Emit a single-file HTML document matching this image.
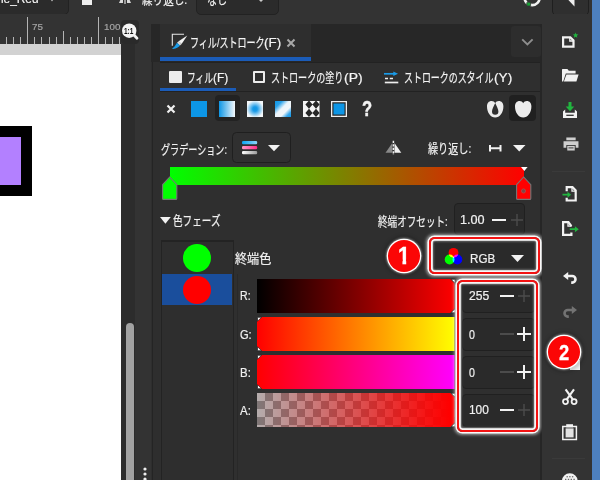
<!DOCTYPE html>
<html lang="ja"><head><meta charset="utf-8"><title>Inkscape fill and stroke</title>
<style>
html,body{margin:0;padding:0}
body{width:600px;height:480px;overflow:hidden;position:relative;background:#333333;font-family:"Liberation Sans","Noto Sans CJK JP",sans-serif}
.a{position:absolute}
.t{position:absolute;white-space:nowrap;transform-origin:0 50%;-webkit-text-stroke:.2px currentColor}
svg{position:absolute;overflow:visible}
.co{border:2px solid #f31212;border-radius:5.500px;box-shadow:0 0 0 1.600px rgba(255,255,255,.95),0 0 3px 2.500px rgba(255,255,255,.5),inset 0 0 0 1.800px rgba(255,255,255,.92),inset 0 0 2px 2.500px rgba(255,255,255,.45)}
.ci{width:32px;height:32px;border-radius:50%;background:#fb0606;box-shadow:0 0 0 1.300px #fff,0 0 2px 2.200px rgba(255,255,255,.38),0 0 4px 3.500px rgba(0,0,0,.28)}
.one{clip-path:polygon(0 0,100% 0,100% 19px,8.900px 19px,8.900px 100%,4.800px 100%,4.800px 19px,0 19px);-webkit-text-stroke:.4px #fff}
.ns{-webkit-text-stroke:0}
.q{-webkit-text-stroke:.5px #f4f4f4}
.two{-webkit-text-stroke:.3px #fff}
.sb{width:71px;height:31px;background:#2a2a2a;border:1px solid #202020;border-radius:4px}
</style></head><body>

<!-- ===== top bar ===== -->
<div class="a" style="left:-6px;top:-6px;width:73px;height:19px;background:#2b2b2b;border:1px solid #222;border-radius:5px"></div>
<span class="t" style="left:-3px;top:-10.1px;font-size:13px;line-height:18.2px;color:#f0f0f0;font-weight:normal;transform:scaleX(0.9130)">ne_Red</span>
<svg style="left:48.500px;top:-3px" width="6" height="5"><path d="M0 0h6l-3 4.500z" fill="#ccc"/></svg>
<div class="a" style="left:82px;top:-4px;width:10px;height:8.500px;background:#eee"></div>
<svg style="left:118px;top:-6px" width="14" height="10"><path d="M1 9L5 0V9zM9 9V0l4 9z" fill="#ddd"/><path d="M7 0v10" stroke="#fff" stroke-width="1"/></svg>
<span class="t" style="left:141.5px;top:-9.1px;font-size:13px;line-height:18.2px;color:#f0f0f0;font-weight:normal;transform:scaleX(0.8125)">繰り返し:</span>
<div class="a" style="left:196px;top:-6px;width:81px;height:19px;background:#2b2b2b;border:1px solid #222;border-radius:5px"></div>
<span class="t" style="left:207px;top:-9.1px;font-size:13px;line-height:18.2px;color:#f0f0f0;font-weight:normal;transform:scaleX(0.7692)">なし</span>
<svg style="left:257px;top:-2px" width="8" height="5"><path d="M0 0h8l-4 4z" fill="#ccc"/></svg>
<svg style="left:524px;top:-3px" width="18" height="12"><path d="M15.70 0.40A7.6 7.6 0 0 1 0.50 0.67" fill="none" stroke="#f2f2f2" stroke-width="2.600"/><rect x="2.800" y="5.200" width="3.800" height="3.800" rx=".6" fill="#17a535" stroke="#333" stroke-width=".8"/></svg>
<div class="a" style="left:552px;top:-6px;width:35px;height:19.500px;background:#2f2f2f;border:1px solid #1f1f1f;border-radius:5px"></div>
<svg style="left:567px;top:-8px" width="9" height="16"><path d="M7.500 0V14.500L1 7.600z" fill="#eee"/></svg>

<!-- ===== ruler ===== -->
<div class="a" id="ruler" style="left:0;top:14px;width:121px;height:30px;background:#333333;overflow:hidden">
<svg style="left:0;top:0" width="121" height="30">
<g stroke="#b4b4b4" stroke-width="1">
<path d="M6.5 23v7M13.5 23v7M20.5 23v7M34.5 23v7M41.5 23v7M49.5 23v7M56.5 23v7M70.5 23v7M77.5 23v7M84.5 23v7M91.5 23v7M105.5 23v7M112.5 23v7M119.5 23v7"/>
<path d="M63.5 17v13"/>
<path d="M27.5 3v27M98.5 3v27"/>
</g></svg>
</div>
<span class="t" style="left:31.7px;top:20.15px;font-size:9.5px;line-height:13.3px;color:#a4a4a4;font-weight:normal;transform:scaleX(1.0273)">75</span>
<span class="t" style="left:103.5px;top:20.15px;font-size:9.5px;line-height:13.3px;color:#a4a4a4;font-weight:normal;transform:scaleX(1.0312)">100</span>
<div class="a" style="left:0;top:44px;width:121px;height:11px;background:#d2d2d2"></div>
<div class="a" style="left:0;top:55px;width:121px;height:425px;background:#fff"></div>
<div class="a" style="left:0;top:126px;width:32px;height:70px;background:#000"></div>
<div class="a" style="left:0;top:137px;width:21px;height:48px;background:#b380ff"></div>

<!-- zoom 1:1 button -->
<div class="a" style="left:121px;top:20px;width:18px;height:24px;background:#2a2a2a;border-radius:4px"></div>
<svg style="left:121px;top:21.100px" width="20" height="20"><path d="M12 13l4 4.200" stroke="#f2f2f2" stroke-width="2.800" stroke-linecap="round"/><circle cx="8.200" cy="9.700" r="7.200" fill="#f4f4f4"/></svg>
<span class="t ns" style="left:124.2px;top:24.35px;font-size:9.5px;line-height:13.3px;color:#111111;font-weight:bold;transform:scaleX(0.6857)">1:1</span>

<!-- vertical scrollbar + handle dots -->
<svg style="left:142px;top:466px" width="6" height="14"><circle cx="3" cy="3" r="1.6" fill="#eee"/><circle cx="3" cy="8" r="1.6" fill="#eee"/><circle cx="3" cy="13" r="1.6" fill="#eee"/></svg>

<!-- ===== panel ===== -->
<div class="a" style="left:121px;top:44px;width:14px;height:436px;background:#2c2c2c"></div>
<div class="a" style="left:151px;top:24px;width:391px;height:456px;background:#2e2e2e"></div>
<div class="a" style="left:151px;top:24px;width:390px;height:38px;background:#272727"></div>
<div class="a" style="left:151.500px;top:62px;width:1px;height:418px;background:#242424"></div>
<div class="a" style="left:160px;top:24px;width:151px;height:33px;background:#2e2e2e"></div>
<div class="a" style="left:160px;top:57px;width:151px;height:4px;background:#1b5cb8"></div>
<div class="a" style="left:160px;top:62px;width:380px;height:418px;background:#2f2f2f;border-top:1px solid #222"></div>
<div class="a" style="left:160px;top:91px;width:381px;height:1px;background:#222"></div>
<div class="a" style="left:160px;top:88px;width:76px;height:3px;background:#1b5cb8"></div>
<div class="a" style="left:540px;top:24px;width:2px;height:456px;background:#262626"></div>
<div class="a" style="left:126px;top:322.500px;width:8px;height:170px;background:#a2a2a2;border-radius:4px"></div>
<!-- chevron button -->
<div class="a" style="left:511px;top:26px;width:30px;height:31px;background:#2d2d2d;border-radius:3px"></div>
<svg style="left:521px;top:37.500px" width="13" height="9"><path d="M1.200 1.300L6.400 6.500l5.200-5.200" fill="none" stroke="#8e8e8e" stroke-width="1.900"/></svg>

<!-- tab: icon + label + close -->
<svg style="left:171px;top:33px" width="17" height="18"><path d="M1.300 12.800V1.200H13" fill="none" stroke="#e8e8e8" stroke-width="1.100"/><path d="M16.300 2.400L10.600 11 7.600 8.200z" fill="#f4f4f4"/><path d="M10.600 11L7.600 8.200 6 9.800 9 12.600z" fill="#d8d8d8"/><path d="M6 9.800L9 12.600C7.200 14.800 4.500 16.400 0.800 15.800 3.400 14.400 4.400 12.300 6 9.800z" fill="#1a9be8"/></svg>
<span class="t" style="left:189.5px;top:34.4px;font-size:13px;line-height:18.2px;color:#f4f4f4;font-weight:normal;transform:scaleX(0.6944)">フィル/ストローク</span><span class="t" style="left:264.2px;top:34.1px;font-size:13px;line-height:18.2px;color:#f4f4f4;font-weight:normal;transform:scaleX(1.0294)">(F)</span>
<svg style="left:286.200px;top:38px" width="10" height="10"><path d="M1.5 1.5l7 7M8.5 1.5l-7 7" stroke="#a8a8a8" stroke-width="2"/></svg>

<!-- sub tabs -->
<div class="a" style="left:168.800px;top:70.600px;width:12.800px;height:12.600px;background:#ececec;border-radius:1px"></div>
<span class="t" style="left:186.8px;top:68.9px;font-size:13px;line-height:18.2px;color:#f4f4f4;font-weight:normal;transform:scaleX(0.6667)">フィル</span><span class="t" style="left:213.2px;top:68.6px;font-size:13px;line-height:18.2px;color:#f4f4f4;font-weight:normal;transform:scaleX(0.9176)">(F)</span>
<div class="a" style="left:252.800px;top:71px;width:8.300px;height:8.300px;border:2px solid #ececec;border-radius:1px"></div>
<span class="t" style="left:271px;top:68.9px;font-size:13px;line-height:18.2px;color:#f4f4f4;font-weight:normal;transform:scaleX(0.6952)">ストロークの塗り</span><span class="t" style="left:343.8px;top:68.6px;font-size:13px;line-height:18.2px;color:#f4f4f4;font-weight:normal;transform:scaleX(1.0706)">(P)</span>
<svg style="left:384px;top:71px" width="15" height="13"><path d="M0 2.800h10.500" stroke="#1a9be8" stroke-width="1.700"/><path d="M9.300 0.600l4.700 2.200-4.700 2.200z" fill="#1a9be8"/><path d="M1 7.500h3M5.800 7.500h3.200" stroke="#eee" stroke-width="1.500"/><path d="M0.800 11.500h13.500" stroke="#eee" stroke-width="1.700"/></svg>
<span class="t" style="left:404.2px;top:68.9px;font-size:13px;line-height:18.2px;color:#f4f4f4;font-weight:normal;transform:scaleX(0.6877)">ストロークのスタイル</span><span class="t" style="left:494.1px;top:68.6px;font-size:13px;line-height:18.2px;color:#f4f4f4;font-weight:normal;transform:scaleX(1.0529)">(Y)</span>

<!-- paint type icons -->
<svg style="left:166px;top:104px" width="10" height="10"><path d="M1.5 1.5l7 7M8.5 1.5l-7 7" stroke="#f0f0f0" stroke-width="2.2"/></svg>
<div class="a" style="left:191px;top:101px;width:16px;height:16px;background:#0d96e6"></div>
<div class="a" style="left:215px;top:95px;width:25px;height:26px;background:#222;border-radius:4px"></div>
<div class="a" style="left:219px;top:101px;width:16px;height:16px;background:linear-gradient(90deg,#0d96e6,#f4f8fb)"></div>
<div class="a" style="left:247px;top:101px;width:16px;height:16px;background:radial-gradient(circle at 50% 50%,#0d96e6 0,#1a9be8 20%,#f4f8fb 75%)"></div>
<div class="a" style="left:275px;top:101px;width:16px;height:16px;background:linear-gradient(135deg,#0d96e6 0,#2aa2ea 22%,#eef5fa 45%,#f2f6fa 66%,#3aa8ec 84%,#0d96e6 100%)"></div>
<svg style="left:302.800px;top:100.900px" width="16.500" height="16" viewBox="0 0 16.500 16"><rect width="16.500" height="16" fill="#f4f4f4"/><path d="M6 -0.55l3.6 4.15l-3.6 4.15l-3.6 -4.15zM6 7.75l3.6 4.15l-3.6 4.15l-3.6 -4.15zM13 -0.55l3.6 4.15l-3.6 4.15l-3.6 -4.15zM13 7.75l3.6 4.15l-3.6 4.15l-3.6 -4.15z" fill="#262626"/></svg>
<div class="a" style="left:331px;top:101px;width:14px;height:14px;border:1px solid #f0f0f0;background:#0d96e6;box-shadow:inset 0 0 0 .3px #f0f0f0,inset 0 0 0 1.500px #2a2a2a"></div>
<span class="t q" style="left:362px;top:93.9px;font-size:22px;line-height:30.8px;color:#f4f4f4;font-weight:bold;transform:scaleX(0.7538)">?</span>
<!-- heart icons -->
<svg style="left:486.900px;top:100.500px" width="17" height="17"><path d="M8.200 2.300C7.500 0.800 6.200 0 4.600 0 1.800 0 0 2.100 0 5.400 0 11.500 3.700 16.500 8.200 16.500 12.700 16.500 16.400 11.500 16.400 5.400 16.400 2.100 14.600 0 11.800 0 10.200 0 8.900 0.800 8.200 2.300z" fill="#ececec"/><path d="M8.200 2C6.600 5.800 5 8.300 5 10.600a3.200 3.200 0 0 0 6.400 0C11.400 8.300 9.800 5.800 8.200 2z" fill="#2f2f2f"/></svg>
<div class="a" style="left:509.300px;top:95.200px;width:27.200px;height:26px;background:#202020;border-radius:4px"></div>
<svg style="left:514.900px;top:100.700px" width="17" height="17"><path d="M8.200 2.300C7.500 0.800 6.200 0 4.600 0 1.800 0 0 2.100 0 5.400 0 11.500 3.700 16.500 8.200 16.500 12.700 16.500 16.400 11.500 16.400 5.400 16.400 2.100 14.600 0 11.800 0 10.200 0 8.900 0.800 8.200 2.300z" fill="#ececec"/></svg>

<!-- gradient row -->
<span class="t" style="left:160.8px;top:141.2px;font-size:13px;line-height:18.2px;color:#f0f0f0;font-weight:normal;transform:scaleX(0.6989)">グラデーション:</span>
<div class="a" style="left:232.300px;top:131.700px;width:57px;height:29.500px;background:#303030;border:1px solid #1f1f1f;border-radius:4.500px"></div>
<svg style="left:242.300px;top:140.800px" width="15.200" height="14"><defs><linearGradient id="gA"><stop offset="0" stop-color="#0aa6f4"/><stop offset="1" stop-color="#8fd6fb"/></linearGradient><linearGradient id="gB"><stop offset="0" stop-color="#ff9cc6"/><stop offset="1" stop-color="#ff2d8a"/></linearGradient><linearGradient id="gC"><stop offset="0" stop-color="#ffffff"/><stop offset="1" stop-color="#9c9c9c"/></linearGradient></defs><rect x="0" y="0" width="15.200" height="3.200" rx="1.200" fill="url(#gA)"/><rect x="0" y="5" width="15.200" height="3.300" rx="1.200" fill="url(#gB)"/><rect x="0" y="10" width="15.200" height="3.200" rx="1.200" fill="url(#gC)"/></svg>
<svg style="left:267.700px;top:144.500px" width="13" height="8"><path d="M0 0h12L6 6.300z" fill="#f2f2f2"/></svg>
<svg style="left:385px;top:140px" width="17" height="16"><path d="M7.300 3V12.800H0.500z" fill="#8a8a8a"/><path d="M9.500 3V12.800h6.800z" fill="#f0f0f0"/><path d="M8.400 0.700V15" stroke="#f0f0f0" stroke-width="1.500" stroke-dasharray="2.200 1.300"/></svg>
<span class="t" style="left:427.5px;top:140.4px;font-size:13px;line-height:18.2px;color:#f0f0f0;font-weight:normal;transform:scaleX(0.7768)">繰り返し:</span>
<svg style="left:488.800px;top:144.700px" width="13" height="7"><path d="M1 0v6.600M11.500 0v6.600M1 3.300h10.500" stroke="#f2f2f2" stroke-width="2" fill="none"/></svg>
<svg style="left:513px;top:145px" width="13" height="8"><path d="M0 0h12.500L6.250 6.500z" fill="#f2f2f2"/></svg>

<!-- gradient bar + stops -->
<div class="a" style="left:169.500px;top:166.700px;width:354.500px;height:18.300px;background:linear-gradient(90deg,#00ff00 0%,#ff0000 100%)"></div>
<svg style="left:162.300px;top:176px" width="16" height="24"><path d="M0.600 8.700L7.700 1 14.800 8.700V22.400a1 1 0 0 1-1 1H1.600a1 1 0 0 1-1-1z" fill="#00ff00" stroke="#767676" stroke-width="1.100"/></svg>
<svg style="left:520.700px;top:166.700px" width="8" height="5"><path d="M0 0h6.600L3.300 4z" fill="#fff"/></svg>
<svg style="left:516.300px;top:176px" width="16" height="24"><path d="M0.600 8.700L7.700 1 14.800 8.700V22.400a1 1 0 0 1-1 1H1.600a1 1 0 0 1-1-1z" fill="#ff0000" stroke="#767676" stroke-width="1.100"/><circle cx="7.500" cy="15" r="2.100" fill="#7a4848" stroke="#b05050" stroke-width=".7"/></svg>

<!-- colour phase header -->
<svg style="left:160px;top:217px" width="11" height="7"><path d="M0 0h10.800L5.400 6.800z" fill="#f2f2f2"/></svg>
<span class="t" style="left:173px;top:212.2px;font-size:13px;line-height:18.2px;color:#f0f0f0;font-weight:normal;transform:scaleX(0.7391)">色フェーズ</span>
<span class="t" style="left:377.5px;top:212.5px;font-size:13px;line-height:18.2px;color:#f0f0f0;font-weight:normal;transform:scaleX(0.7368)">終端オフセット:</span>
<div class="a" style="left:454px;top:203px;width:69px;height:29.500px;background:#2a2a2a;border:1px solid #202020;border-radius:4px"></div>
<span class="t" style="left:460px;top:211.85px;font-size:12.5px;line-height:17.5px;color:#f0f0f0;font-weight:normal;transform:scaleX(1.0125)">1.00</span>
<div class="a" style="left:491.500px;top:219px;width:14px;height:2px;background:#f2f2f2"></div>
<svg style="left:511px;top:214px" width="12" height="12"><path d="M6 0v12M0 6h12" stroke="#4c4c4c" stroke-width="1.400"/></svg>

<!-- stop list -->
<div class="a" style="left:161px;top:240px;width:70.500px;height:260px;border:1px solid #232323;border-top:2px solid #232323;background:#2e2e2e"></div>
<div class="a" style="left:162px;top:273.700px;width:70px;height:31.600px;background:#1a4e9c"></div>
<div class="a" style="left:183px;top:244px;width:28px;height:28px;border-radius:50%;background:#00ff00"></div>
<div class="a" style="left:183px;top:276px;width:28px;height:28px;border-radius:50%;background:#ff0000"></div>
<div class="a" style="left:237px;top:274px;width:1px;height:206px;background:#292929"></div>
<span class="t" style="left:235px;top:250.1px;font-size:13px;line-height:18.2px;color:#f0f0f0;font-weight:normal;transform:scaleX(0.9308)">終端色</span>

<!-- RGB dropdown + callout 1 -->
<div class="a" style="left:433.300px;top:240.500px;width:101.500px;height:27.500px;background:#2a2a2a;border:1px solid #202020;border-radius:4.500px"></div>
<svg style="left:444px;top:247px;isolation:isolate" width="19" height="18"><g style="isolation:isolate"><circle cx="9.500" cy="5.800" r="4.900" fill="#ff0000"/><circle cx="5.600" cy="12.500" r="4.900" fill="#00ff00" style="mix-blend-mode:screen"/><circle cx="13.400" cy="12.500" r="4.900" fill="#0000ff" style="mix-blend-mode:screen"/></g></svg>
<span class="t" style="left:469.5px;top:251.46px;font-size:12.2px;line-height:17.08px;color:#f0f0f0;font-weight:normal;transform:scaleX(0.9538)">RGB</span>
<svg style="left:510.500px;top:254.500px" width="14" height="8"><path d="M0 0h13L6.500 7z" fill="#f2f2f2"/></svg>
<div class="a co" style="left:429px;top:236.700px;width:107px;height:33.200px"></div>
<div class="a ci" style="left:388.200px;top:240px"></div>
<span class="t one" style="left:397.8px;top:240.4px;font-size:23px;line-height:32.2px;color:#ffffff;font-weight:bold;transform:scaleX(0.9231)">1</span>

<!-- sliders -->
<span class="t" style="left:240px;top:288.25px;font-size:12.5px;line-height:17.5px;color:#f0f0f0;font-weight:normal;transform:scaleX(0.8462)">R:</span>
<span class="t" style="left:240px;top:326.75px;font-size:12.5px;line-height:17.5px;color:#f0f0f0;font-weight:normal;transform:scaleX(0.8846)">G:</span>
<span class="t" style="left:240px;top:364.75px;font-size:12.5px;line-height:17.5px;color:#f0f0f0;font-weight:normal;transform:scaleX(0.9167)">B:</span>
<span class="t" style="left:240px;top:402.85px;font-size:12.5px;line-height:17.5px;color:#f0f0f0;font-weight:normal;transform:scaleX(0.9167)">A:</span>
<div class="a" style="left:257px;top:279px;width:197.5px;height:34px;background:linear-gradient(90deg,#000 0%,#ff0000 100%);clip-path:polygon(0 0,calc(100% - 4px) 0,100% 4px,100% calc(100% - 4px),calc(100% - 4px) 100%,0 100%)"></div>
<div class="a" style="left:257px;top:317px;width:197.5px;height:34px;background:linear-gradient(90deg,#ff0000 0%,#ffff00 100%);clip-path:polygon(4px 0,100% 0,100% 100%,4px 100%,0 calc(100% - 4px),0 4px)"></div>
<div class="a" style="left:257px;top:355px;width:197.5px;height:34px;background:linear-gradient(90deg,#ff0000 0%,#ff00ff 100%);clip-path:polygon(4px 0,100% 0,100% 100%,4px 100%,0 calc(100% - 4px),0 4px)"></div>
<div class="a" style="left:257px;top:393px;width:197.5px;height:34px;clip-path:polygon(0 0,calc(100% - 4px) 0,100% 4px,100% calc(100% - 4px),calc(100% - 4px) 100%,0 100%);background:linear-gradient(90deg,rgba(255,0,0,.03) 0%,rgba(255,0,0,1) 97%),conic-gradient(#7c7c7c 25%,#b2b2b2 0 50%,#7c7c7c 0 75%,#b2b2b2 0) 0 0/16px 16px"></div>
<!-- slider markers -->
<svg style="left:450px;top:279px" width="6" height="34"><path d="M5 0.300h-4L5 4.300z" fill="#fff" stroke="#1c1c1c" stroke-width=".7"/><path d="M5 33.7h-4L5 29.7z" fill="#fff" stroke="#1c1c1c" stroke-width=".7"/></svg>
<svg style="left:256.500px;top:317px" width="6" height="34"><path d="M0.500 0.300h4L0.500 4.300z" fill="#fff" stroke="#1c1c1c" stroke-width=".7"/><path d="M0.500 33.7h4L0.500 29.7z" fill="#fff" stroke="#1c1c1c" stroke-width=".7"/></svg>
<svg style="left:256.500px;top:355px" width="6" height="34"><path d="M0.500 0.300h4L0.500 4.300z" fill="#fff" stroke="#1c1c1c" stroke-width=".7"/><path d="M0.500 33.7h4L0.500 29.7z" fill="#fff" stroke="#1c1c1c" stroke-width=".7"/></svg>
<svg style="left:450px;top:393px" width="6" height="34"><path d="M5 0.300h-4L5 4.300z" fill="#fff" stroke="#1c1c1c" stroke-width=".7"/><path d="M5 33.7h-4L5 29.7z" fill="#fff" stroke="#1c1c1c" stroke-width=".7"/></svg>

<!-- spin boxes + callout 2 -->
<div class="a sb" style="left:461.500px;top:279.500px"></div>
<div class="a sb" style="left:461.500px;top:317.500px"></div>
<div class="a sb" style="left:461.500px;top:355.500px"></div>
<div class="a sb" style="left:461.500px;top:393.500px"></div>
<span class="t" style="left:468.5px;top:288.3px;font-size:12px;line-height:16.8px;color:#f0f0f0;font-weight:normal;transform:scaleX(1.0100)">255</span>
<span class="t" style="left:468.5px;top:326.5px;font-size:12px;line-height:16.8px;color:#f0f0f0;font-weight:normal;transform:scaleX(0.8857)">0</span>
<span class="t" style="left:468.5px;top:364.5px;font-size:12px;line-height:16.8px;color:#f0f0f0;font-weight:normal;transform:scaleX(0.8857)">0</span>
<span class="t" style="left:468.5px;top:402.1px;font-size:12px;line-height:16.8px;color:#f0f0f0;font-weight:normal;transform:scaleX(0.9900)">100</span>
<div class="a" style="left:500px;top:295px;width:14px;height:2px;background:#f2f2f2"></div>
<svg style="left:518.200px;top:290px" width="12" height="12"><path d="M6 0v12M0 6h12" stroke="#4c4c4c" stroke-width="1.400"/></svg>
<div class="a" style="left:500px;top:333.300px;width:14px;height:1.500px;background:#4c4c4c"></div>
<svg style="left:517.300px;top:327.100px" width="14" height="14"><path d="M7 0v14M0 7h14" stroke="#f2f2f2" stroke-width="2"/></svg>
<div class="a" style="left:500px;top:371.300px;width:14px;height:1.500px;background:#4c4c4c"></div>
<svg style="left:517.300px;top:365.100px" width="14" height="14"><path d="M7 0v14M0 7h14" stroke="#f2f2f2" stroke-width="2"/></svg>
<div class="a" style="left:500px;top:409px;width:14px;height:2px;background:#f2f2f2"></div>
<svg style="left:518.200px;top:404px" width="12" height="12"><path d="M6 0v12M0 6h12" stroke="#4c4c4c" stroke-width="1.400"/></svg>
<div class="a co" style="left:457.200px;top:280.400px;width:77px;height:147.300px"></div>

<!-- ===== right toolbar ===== -->
<div class="a" style="left:542px;top:14px;width:50px;height:466px;background:#333333"></div>
<div class="a" style="left:592px;top:0;width:8px;height:480px;background:#4d80bf"></div>
<div class="a" style="left:552px;top:171px;width:33px;height:1px;background:#3a3a3a"></div>
<div class="a" style="left:552px;top:458px;width:33px;height:1px;background:#3a3a3a"></div>

<!-- new -->
<svg style="left:562px;top:33.600px" width="18" height="16"><path d="M1.100 3.300h7.200l3.200 3.200v6.200H1.100z" fill="none" stroke="#f2f2f2" stroke-width="2.200"/><path d="M7.800 3v4h4" fill="none" stroke="#f2f2f2" stroke-width="1.300"/><path d="M13.60 -1.50L14.36 0.35L16.36 0.50L14.84 1.80L15.30 3.75L13.60 2.70L11.90 3.75L12.36 1.80L10.84 0.50L12.84 0.35z" fill="#21b53f"/></svg>
<!-- open -->
<svg style="left:561.500px;top:68.700px" width="17" height="14"><path d="M0 12.600V0.600a.6 .6 0 0 1 .6-.6h4.800l1.400 1.800h6.800v2.600H3.800L1.200 12.600z" fill="#f2f2f2"/><path d="M4.400 5.600H16.600L14.400 12.600H1.900z" fill="#f2f2f2"/></svg>
<!-- save -->
<svg style="left:562px;top:101.500px" width="16" height="17"><path d="M6.500 0h3v4.500h2.800L8 9.300 3.700 4.500h2.800z" fill="#21b53f"/><path d="M1 9.500l2.200-2v3.200h9.600V7.500l2.200 2V16H1z" fill="#f2f2f2"/><path d="M4.300 13.300h7.400" stroke="#333" stroke-width="1.300"/></svg>
<!-- print -->
<svg style="left:562.500px;top:137.200px" width="16" height="14" viewBox="0 0 17 15"><path d="M3.500 0.500h10v3h-10z" fill="#cfcfcf"/><path d="M0.500 4.500h16v7h-3v-3h-10v3h-3z" fill="#cfcfcf"/><path d="M4.500 9.500h8v5h-8z" fill="#cfcfcf"/><path d="M5.800 11.700h5.400" stroke="#333" stroke-width="1"/></svg>
<!-- import -->
<svg style="left:562px;top:185.500px" width="16" height="17"><path d="M4.700 5.300V1.200h5.800l3.200 3.200V14.500H4.700v-2.800" fill="none" stroke="#f2f2f2" stroke-width="2.200"/><path d="M10 1.500v3.700h3.700" fill="none" stroke="#f2f2f2" stroke-width="1.300"/><path d="M0.500 7.800h5V5.700l3.600 3-3.600 3V9.600h-5z" fill="#21b53f"/></svg>
<!-- export -->
<svg style="left:561.500px;top:220.500px" width="18" height="16"><path d="M9.400 5.200l-3-4H1.100V13.800h8.300v-2.300" fill="none" stroke="#f2f2f2" stroke-width="2.200"/><path d="M6 1.500v3.700h3.700" fill="none" stroke="#f2f2f2" stroke-width="1.300"/><path d="M7.700 7.300h5.200V5.200l3.900 3-3.900 3V9.100H7.700z" fill="#21b53f"/></svg>
<!-- undo -->
<svg style="left:563px;top:271.600px" width="14" height="12"><path d="M4.500 4H9.200a3.300 3.300 0 0 1 0 6.600H8.200" fill="none" stroke="#f2f2f2" stroke-width="2.600"/><path d="M0 4L5.200 0v8z" fill="#f2f2f2"/></svg>
<!-- redo -->
<svg style="left:563.200px;top:306.400px" width="14" height="12"><path d="M9.500 4H4.800a3.300 3.300 0 0 0 0 6.600H5.800" fill="none" stroke="#737373" stroke-width="2.600"/><path d="M14 4L8.800 0v8z" fill="#737373"/></svg>
<!-- hidden copy icon bit -->
<div class="a" style="left:570px;top:360px;width:10px;height:9.800px;background:#f2f2f2"></div>
<!-- callout 2 -->
<div class="a ci" style="left:547.900px;top:335.700px"></div>
<span class="t two" style="left:558.7px;top:336.65px;font-size:22.5px;line-height:31.5px;color:#ffffff;font-weight:bold;transform:scaleX(0.8154)">2</span>
<!-- cut -->
<svg style="left:561.600px;top:388.800px" width="16" height="17"><path d="M3.600 0.300L10.800 10.400M12 0.300L4.800 10.400" stroke="#f2f2f2" stroke-width="2.100" fill="none"/><circle cx="3.500" cy="12.600" r="2.500" fill="none" stroke="#f2f2f2" stroke-width="1.800"/><circle cx="12.100" cy="12.600" r="2.500" fill="none" stroke="#f2f2f2" stroke-width="1.800"/></svg>
<!-- paste -->
<svg style="left:561.500px;top:424px" width="16" height="17"><path d="M0.800 2.600h13.600V15.600H0.800z" fill="none" stroke="#f2f2f2" stroke-width="1.500"/><path d="M4.200 0.200h6.800v3.200H4.200z" fill="#f2f2f2"/><path d="M3.600 4.400h8v9h-8z" fill="#e2e2e2"/></svg>
<!-- globe top -->
<svg style="left:562px;top:472.800px" width="16" height="8"><path d="M0 8a7.800 7.800 0 0 1 15.600 0z" fill="#f2f2f2"/><path d="M3 6.300h1.400M5.800 6.300h1.400M8.600 6.300h1.400M11.400 6.300h1.400M4.500 3.800h1.400M7.200 3.800h1.400M9.900 3.800h1.400" stroke="#444" stroke-width="1"/></svg>
</body></html>
